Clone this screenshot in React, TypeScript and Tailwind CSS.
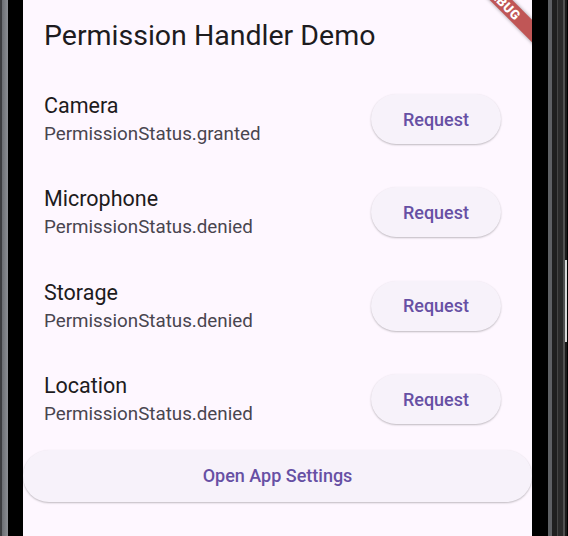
import React from "react";

const permissions = [
  { name: "Camera", status: "PermissionStatus.granted" },
  { name: "Microphone", status: "PermissionStatus.denied" },
  { name: "Storage", status: "PermissionStatus.denied" },
  { name: "Location", status: "PermissionStatus.denied" },
];

function PermissionRow({ name, status }: { name: string; status: string }) {
  return (
    <div className="flex h-[93.3px] items-center justify-between pl-[21px] pr-[31px]">
      <div className="flex flex-col pt-[2px]">
        <span className="text-[21.5px] leading-[28px] text-[#1d1b20]">{name}</span>
        <span className="text-[18.8px] leading-[28px] text-[#49454f]">{status}</span>
      </div>
      <button className="flex h-[50px] w-[130px] items-center justify-center rounded-full bg-[#f7f2fa] text-[18px] font-medium text-[#6750a4] shadow-[0_1px_2px_rgba(0,0,0,0.25)]">
        Request
      </button>
    </div>
  );
}

export default function App() {
  return (
    <div
      className="flex h-[536px] w-[568px] overflow-hidden bg-black"
      style={{ fontFamily: "Roboto, 'Noto Sans', sans-serif" }}
    >
      {/* left bezel */}
      <div className="w-[2px] bg-[#3c3d40]" />
      <div className="w-[6px] bg-gradient-to-r from-[#6b6e73] to-[#8c8f94]" />
      <div className="w-[15px] bg-black" />

      {/* screen */}
      <div className="relative flex w-[509px] flex-col overflow-hidden bg-[#fef7ff]">
        <div className="pl-[21px] pt-[17.5px] text-[28.5px] leading-[36px] text-[#1d1b20]">
          Permission Handler Demo
        </div>
        <div className="mt-[19px] flex flex-col">
          {permissions.map((p) => (
            <PermissionRow key={p.name} name={p.name} status={p.status} />
          ))}
        </div>
        <button className="mt-[4px] flex h-[52px] w-full items-center justify-center rounded-full bg-[#f7f2fa] text-[18px] font-medium text-[#6750a4] shadow-[0_1px_2px_rgba(0,0,0,0.25)]">
          Open App Settings
        </button>

        {/* debug banner */}
        <div className="absolute left-[425px] top-[-6px] flex h-[16px] w-[110px] rotate-45 items-center justify-center bg-[#c05656] shadow-[0_0_4px_rgba(0,0,0,0.4)]">
          <span className="text-[13px] font-black leading-none tracking-[0.5px] text-white">DEBUG</span>
        </div>
      </div>

      {/* right bezel */}
      <div className="w-[16px] bg-black" />
      <div className="w-[4px] bg-[#5e6064]" />
      <div className="w-[5px] bg-[#1f1f1f]" />
      <div className="w-[1px] bg-[#454545]" />
      <div className="w-[5px] bg-[#2a2a2a]" />
      <div className="w-[2px] bg-[#505050]" />
      <div className="flex w-[2px] flex-col bg-[#1a1a1a]">
        <div className="h-[260px]" />
        <div className="h-[82px] bg-[#d8d8d8]" />
      </div>
    </div>
  );
}
